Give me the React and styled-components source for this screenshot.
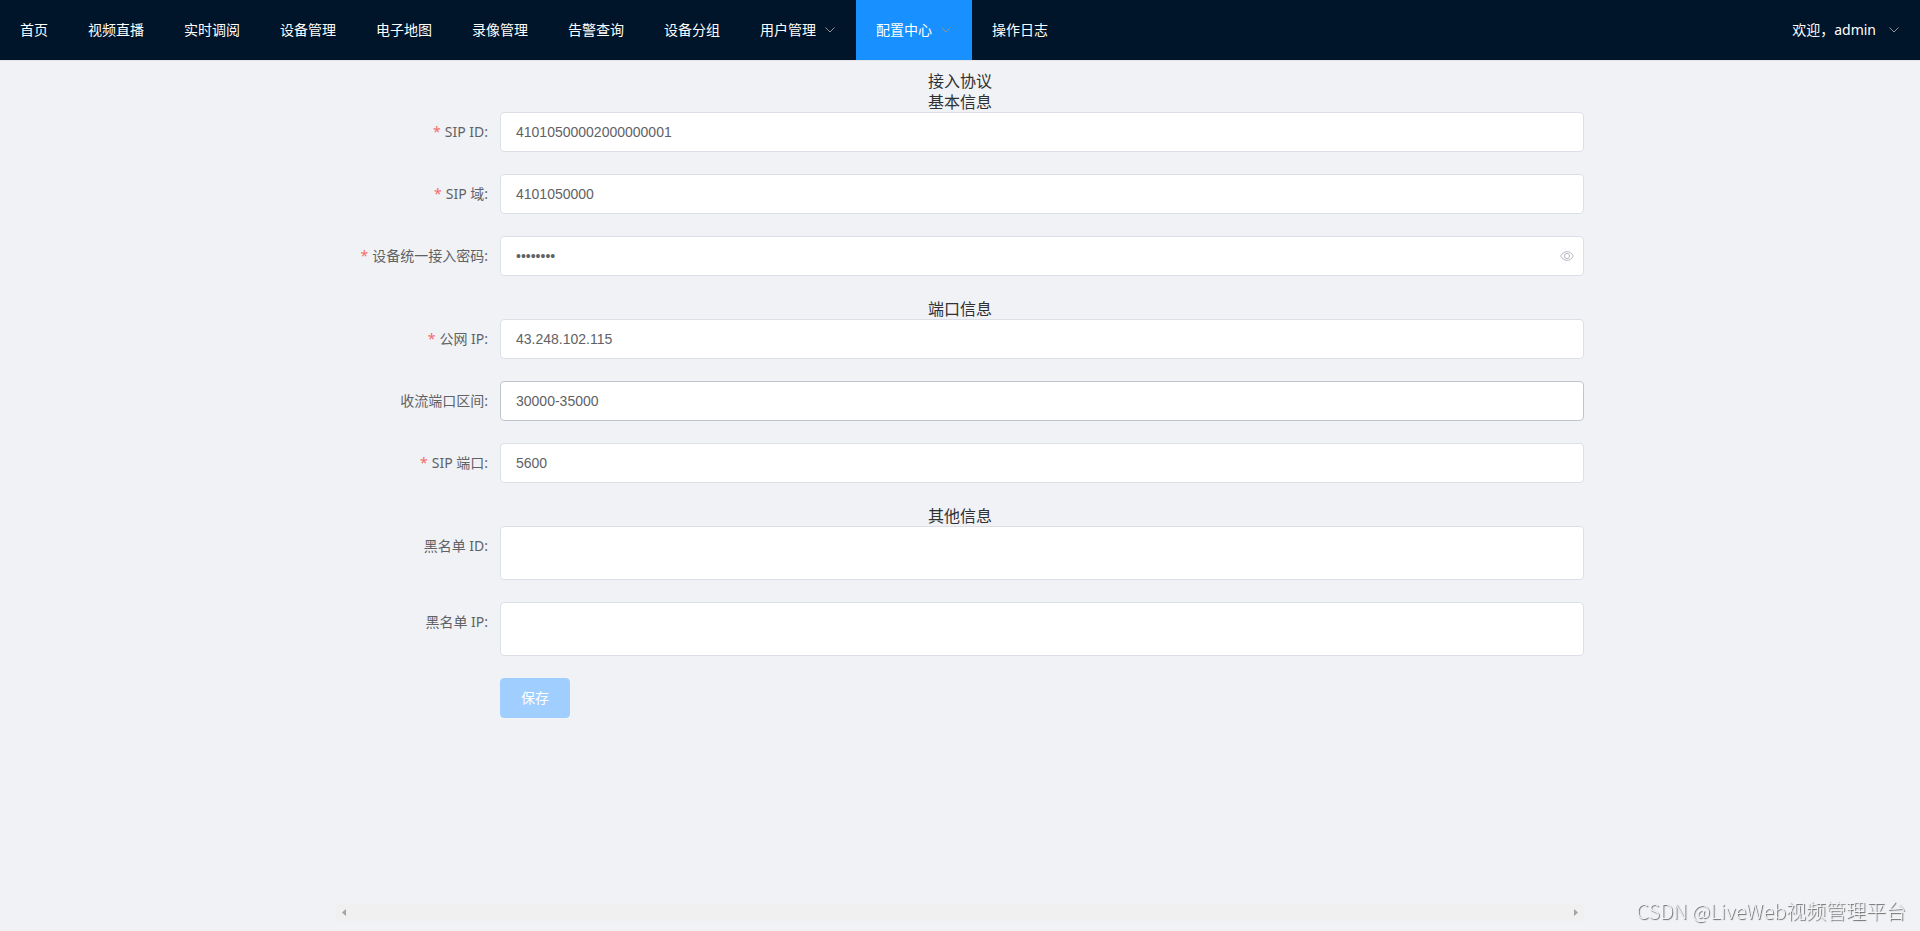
import React from 'react'
import styled, { createGlobalStyle, css } from 'styled-components'

const GlobalStyle = createGlobalStyle`
  * { box-sizing: border-box; }

  body {
    margin: 0;
    background: #f0f2f6;
    color: #303133;
    font-family: "Noto Sans", "Noto Sans CJK SC", sans-serif;
    font-size: 14px;
  }
`

const Page = styled.div`
  display: flex;
  flex-direction: column;
  min-height: 100vh;
`

const Header = styled.header`
  display: flex;
  justify-content: space-between;
  background: #001529;
  border-bottom: 1px solid #e6e6e6;
`

const Nav = styled.nav`
  display: flex;
`

const NavItem = styled.a`
  display: flex;
  align-items: center;
  gap: 8px;
  padding: 0 20px;
  line-height: 60px;
  color: #fff;
  white-space: nowrap;
  text-decoration: none;
  background: ${ props => props.$active ? '#1890ff' : 'transparent' };
`

const UserLink = styled(NavItem)`
  gap: 12px;
`

const ArrowIcon = styled.svg`
  width: 12px;
  height: 12px;
  fill: none;
  stroke: #909399;
`

const Main = styled.main`
  flex: 1;
  display: flex;
  flex-direction: column;
  width: 65%;
  margin: 0 auto;
  padding: 9px 0 10px;
`

const Form = styled.form`
  flex: 1;
`

const Title = styled.h2`
  margin: 0;
  padding-top: 2px;
  font-size: 16px;
  font-weight: 400;
  line-height: 19px;
  text-align: center;
`

const Row = styled.div`
  display: flex;
  margin-bottom: 22px;
`

const Label = styled.label`
  flex: none;
  width: 164px;
  padding-right: 12px;
  line-height: 40px;
  color: #606266;
  text-align: right;

  ${ props => props.$required && css`
    &::before {
      content: '*';
      margin-right: 4px;
      color: #f56c6c;
    }
  ` }
`

const Field = styled.div`
  position: relative;
  flex: 1;
`

const control = css`
  display: block;
  width: 100%;
  border: 1px solid #dcdfe6;
  border-radius: 4px;
  outline: none;
  background: #fff;
  color: #606266;
  font-family: "Liberation Sans", Arial, sans-serif;
  font-size: 14px;

  &:focus { border-color: #409eff; }
`

const Input = styled.input`
  ${ control }
  height: 40px;
  padding: 0 15px;
  border-color: ${ props => props.$hovered ? '#c0c4cc' : '#dcdfe6' };
`

const Textarea = styled.textarea`
  ${ control }
  height: 54px;
  padding: 5px 15px;
  resize: none;
`

const EyeButton = styled.button`
  position: absolute;
  top: 0;
  right: 5px;
  display: flex;
  align-items: center;
  justify-content: center;
  width: 25px;
  height: 40px;
  padding: 0;
  border: 0;
  background: none;
  color: #b4b9c2;
`

const SaveButton = styled.button`
  height: 40px;
  margin-left: 164px;
  padding: 0 20px 2px;
  border: 1px solid #a0cfff;
  border-radius: 4px;
  background: #a0cfff;
  color: #fff;
  font-family: inherit;
  font-size: 14px;
  font-weight: 400;
`

const ScrollTrack = styled.div`
  display: flex;
  align-items: center;
  justify-content: space-between;
  height: 17px;
  padding: 0 6px;
  background: #f0f0f0;
`

const ScrollArrow = styled.svg`
  width: 4px;
  height: 7px;
  fill: #a3a3a3;
`

const Watermark = styled.div`
  position: fixed;
  right: 14px;
  bottom: 6px;
  font-family: "Noto Sans CJK SC", sans-serif;
  font-size: 20px;
  font-weight: 300;
  line-height: 28px;
  color: #f4f4f4;
  text-shadow: 1px 1px 1px #666;
`

const menu = [
  { name: '首页' },
  { name: '视频直播' },
  { name: '实时调阅' },
  { name: '设备管理' },
  { name: '电子地图' },
  { name: '录像管理' },
  { name: '告警查询' },
  { name: '设备分组' },
  { name: '用户管理', sub: true },
  { name: '配置中心', sub: true, active: true },
  { name: '操作日志' }
]

const Arrow = () =>
<ArrowIcon viewBox="0 0 12 12" aria-hidden="true">
  <path d="M1.5 3.5 L6 8 L10.5 3.5"/>
</ArrowIcon>

const Eye = () =>
<svg width="14" height="10" viewBox="0 0 14 10" fill="none" stroke="currentColor" aria-hidden="true">
  <path d="M.6 5 C3.6 -.8 10.4 -.8 13.4 5 C10.4 10.8 3.6 10.8 .6 5 Z"/>
  <circle cx="7" cy="5" r="2.6"/>
</svg>

const FormRow = ( { id, label, required, children } ) =>
<Row>
  <Label htmlFor={ id } $required={ required }>{ label }</Label>
  <Field>{ children }</Field>
</Row>

const TextRow = ( { id, label, required, ...input } ) =>
<FormRow id={ id } label={ label } required={ required }>
  <Input id={ id } { ...input }/>
</FormRow>

export default () =>
<Page>
  <GlobalStyle/>

  <Header>
    <Nav>
      {
        menu.map( item => (
          <NavItem key={ item.name } href="#" $active={ item.active }>
            { item.name }
            { item.sub && <Arrow/> }
          </NavItem>
        ) )
      }
    </Nav>
    <UserLink href="#">欢迎，admin<Arrow/></UserLink>
  </Header>

  <Main>
    <Form>
      <Title>接入协议</Title>

      <Title>基本信息</Title>
      <TextRow id="sip-id" label="SIP ID:" required defaultValue="41010500002000000001"/>
      <TextRow id="sip-domain" label="SIP 域:" required defaultValue="4101050000"/>
      <FormRow id="password" label="设备统一接入密码:" required>
        <Input id="password" type="password" defaultValue="12345678"/>
        <EyeButton type="button" aria-label="显示密码"><Eye/></EyeButton>
      </FormRow>

      <Title>端口信息</Title>
      <TextRow id="public-ip" label="公网 IP:" required defaultValue="43.248.102.115"/>
      <TextRow id="port-range" label="收流端口区间:" $hovered defaultValue="30000-35000"/>
      <TextRow id="sip-port" label="SIP 端口:" required defaultValue="5600"/>

      <Title>其他信息</Title>
      <FormRow id="black-id" label="黑名单 ID:">
        <Textarea id="black-id"/>
      </FormRow>
      <FormRow id="black-ip" label="黑名单 IP:">
        <Textarea id="black-ip"/>
      </FormRow>

      <SaveButton type="button">保存</SaveButton>
    </Form>

    <ScrollTrack>
      <ScrollArrow viewBox="0 0 4 7"><path d="M4 0 L0 3.5 L4 7 Z"/></ScrollArrow>
      <ScrollArrow viewBox="0 0 4 7"><path d="M0 0 L4 3.5 L0 7 Z"/></ScrollArrow>
    </ScrollTrack>
  </Main>

  <Watermark>CSDN @LiveWeb视频管理平台</Watermark>
</Page>
